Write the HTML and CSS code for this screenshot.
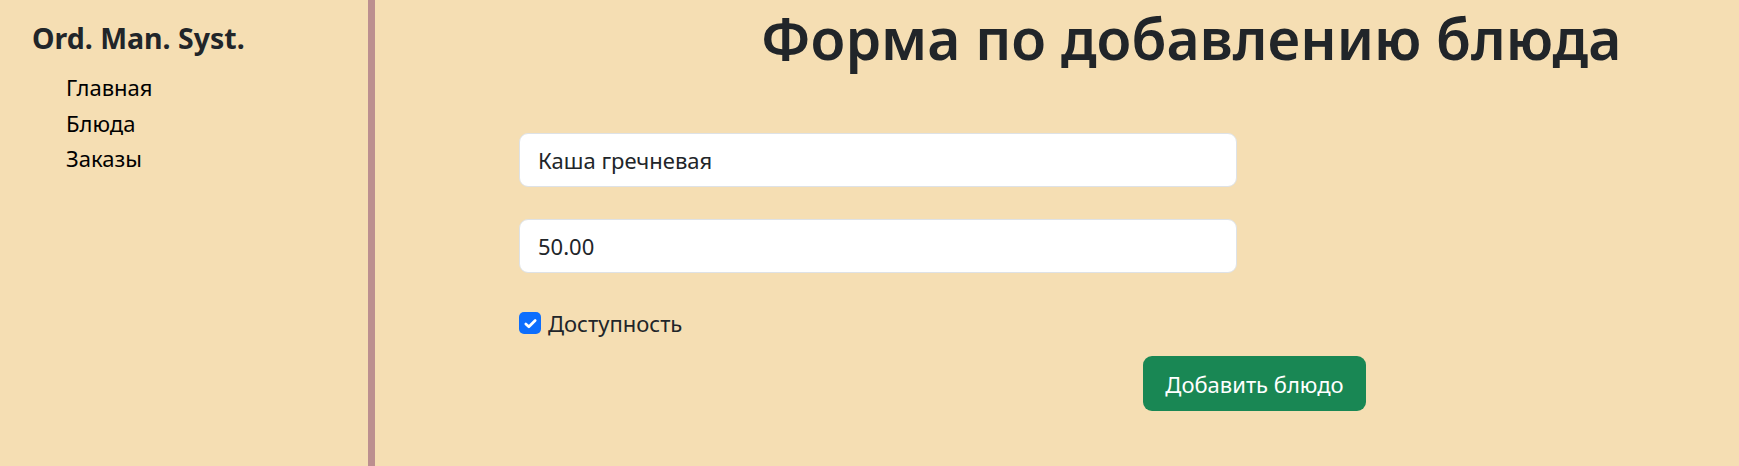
FILE: index.html
```html
<!DOCTYPE html>
<html lang="ru">
<head>
<meta charset="utf-8">
<title>Форма по добавлению блюда</title>
<link rel="stylesheet" href="styles.css">
</head>
<body>
<div class="layout">
  <aside class="sidebar">
    <h4 class="brand">Ord. Man. Syst.</h4>
    <ul class="nav">
      <li><a href="#">Главная</a></li>
      <li><a href="#">Блюда</a></li>
      <li><a href="#">Заказы</a></li>
    </ul>
  </aside>
  <main class="content">
    <h1 class="title">Форма по добавлению блюда</h1>
    <form class="dish-form">
      <input class="field" type="text" value="Каша гречневая">
      <input class="field" type="text" value="50.00">
      <label class="check">
        <span class="check-box">
          <svg viewBox="0 0 20 20" width="17" height="17"><path d="M4.5 10.5l3.6 3.4L15.5 6.5" fill="none" stroke="#fff" stroke-width="3.2" stroke-linecap="round" stroke-linejoin="round"/></svg>
        </span>
        <span class="check-label">Доступность</span>
      </label>
      <button class="btn" type="button">Добавить блюдо</button>
    </form>
  </main>
</div>
</body>
</html>
```
FILE: styles.css
```css
html, body {
  margin: 0;
  padding: 0;
  height: 100%;
}
body {
  background: #f5deb3;
  font-family: "Noto Sans", "Open Sans", sans-serif;
  color: #212529;
}
.layout {
  display: flex;
  min-height: 100vh;
}
.sidebar {
  width: 336px;
  flex: 0 0 336px;
  border-right: 7px solid #bc8f8f;
  padding: 21px 0 0 32px;
}
.brand {
  margin: 0 0 15px;
  font-size: 28.5px;
  font-weight: 700;
  line-height: 1.2;
  color: #212529;
}
.nav {
  list-style: none;
  margin: 0;
  padding: 0 0 0 34px;
}
.nav li {
  line-height: 35.5px;
  font-size: 22px;
}
.nav a {
  color: #000;
  text-decoration: none;
}
.content {
  flex: 1;
  padding: 4px 0 0 144px;
}
.title {
  margin: 0 0 0 242px;
  font-size: 57px;
  font-weight: 600;
  line-height: 1.2;
  color: #212529;
}
.dish-form {
  width: 847px;
  display: flex;
  flex-direction: column;
  margin-top: 61px;
}
.field {
  box-sizing: border-box;
  width: 718px;
  height: 54px;
  border: 1px solid #dee2e6;
  border-radius: 9px;
  background: #fff;
  padding: 0 18px;
  font: 22px "Noto Sans", "Open Sans", sans-serif;
  color: #212529;
  margin-bottom: 32px;
  outline: none;
}
.check {
  display: flex;
  align-items: center;
  gap: 7px;
  margin-top: 5px;
  height: 26px;
}
.check-box {
  width: 22px;
  height: 22px;
  border-radius: 5px;
  background: #0d6efd;
  display: flex;
  align-items: center;
  justify-content: center;
}
.check-label {
  font-size: 22px;
  color: #212529;
}
.btn {
  align-self: flex-end;
  margin-top: 20px;
  width: 223px;
  height: 55px;
  border: none;
  border-radius: 9px;
  background: #198754;
  color: #fff;
  font: 22px "Noto Sans", "Open Sans", sans-serif;
  cursor: pointer;
}
```
